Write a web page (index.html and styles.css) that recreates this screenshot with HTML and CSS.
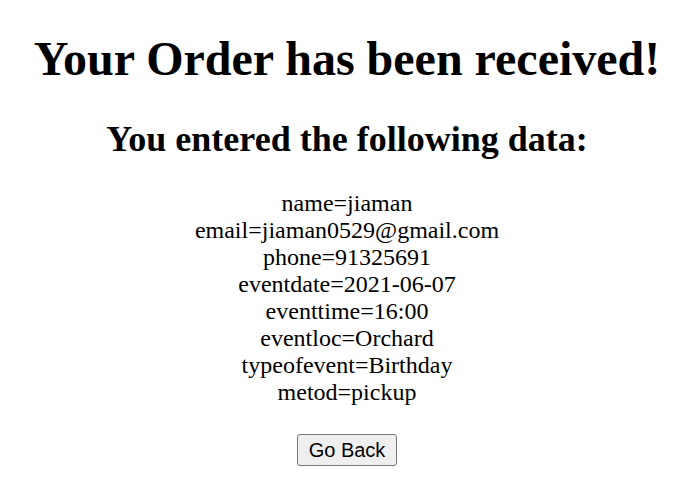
FILE: index.html
```html
<!DOCTYPE html>
<html lang="en">
<head>
<meta charset="utf-8">
<title>Order received</title>
<link rel="stylesheet" href="styles.css">
</head>
<body>
<main class="page">
  <h1 class="title">Your Order has been received!</h1>
  <h2 class="subtitle">You entered the following data:</h2>
  <div class="data">
    <div class="row">name=jiaman</div>
    <div class="row">email=jiaman0529@gmail.com</div>
    <div class="row">phone=91325691</div>
    <div class="row">eventdate=2021-06-07</div>
    <div class="row">eventtime=16:00</div>
    <div class="row">eventloc=Orchard</div>
    <div class="row">typeofevent=Birthday</div>
    <div class="row">metod=pickup</div>
  </div>
  <div class="actions">
    <button class="back" type="button">Go Back</button>
  </div>
</main>
</body>
</html>
```

FILE: styles.css
```css
html, body {
  background: #ffffff;
}
body {
  margin: 12px 18px 12px 12px;
  font-family: "Liberation Serif", "Times New Roman", serif;
  font-size: 24px;
  color: #000000;
}
.page {
  text-align: center;
}
.title {
  font-size: 48px;
  font-weight: bold;
  margin: 19px 0 32px;
}
.subtitle {
  font-size: 36px;
  font-weight: bold;
  margin: 30px 0;
}
.data {
  line-height: 27px;
}
.actions {
  margin-top: 28px;
  line-height: 0;
}
.back {
  font-family: "Liberation Sans", Arial, sans-serif;
  font-size: 20px;
  color: #000000;
  background: #efefef;
  border: 1px solid #767676;
  border-radius: 3px;
  padding: 3px 11px;
  line-height: 24px;
}
```
